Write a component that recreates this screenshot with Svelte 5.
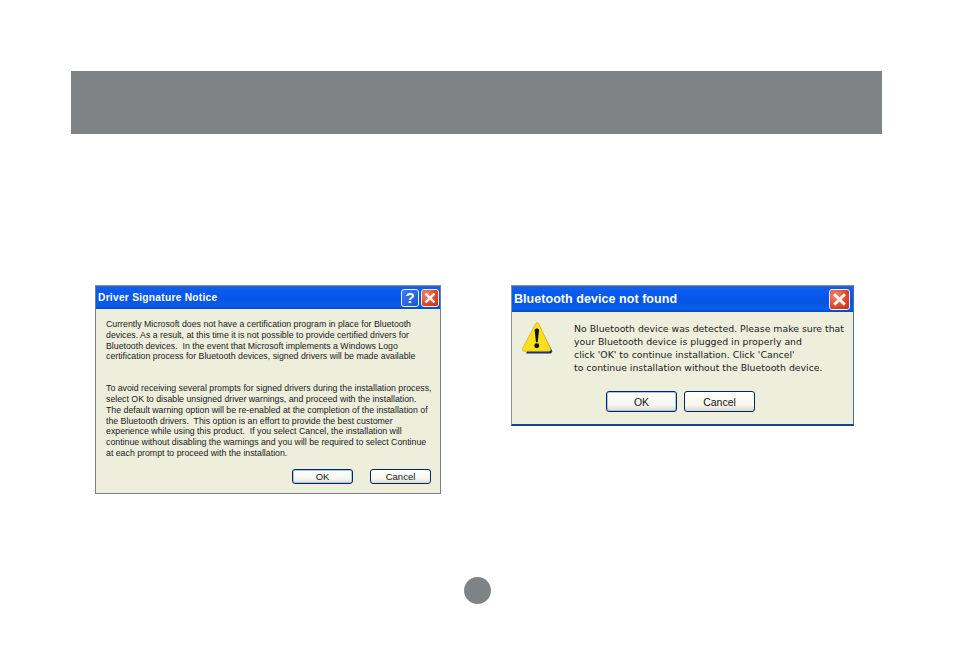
<script lang="ts">
  const noticeParagraphs = [
    [
      'Currently Microsoft does not have a certification program in place for Bluetooth',
      'devices. As a result, at this time it is not possible to provide certified drivers for',
      'Bluetooth devices.  In the event that Microsoft implements a Windows Logo',
      'certification process for Bluetooth devices, signed drivers will be made available'
    ],
    [
      'To avoid receiving several prompts for signed drivers during the installation process,',
      'select OK to disable unsigned driver warnings, and proceed with the installation.',
      'The default warning option will be re-enabled at the completion of the installation of',
      'the Bluetooth drivers.  This option is an effort to provide the best customer',
      'experience while using this product.  If you select Cancel, the installation will',
      'continue without disabling the warnings and you will be required to select Continue',
      'at each prompt to proceed with the installation.'
    ]
  ];

  const notFoundLines = [
    'No Bluetooth device was detected. Please make sure that',
    'your Bluetooth device is plugged in properly and',
    "click 'OK' to continue installation. Click 'Cancel'",
    'to continue installation without the Bluetooth device.'
  ];
</script>

<div class="page">
  <div class="banner"></div>

  <div class="dialogs">
    <section class="dialog notice">
      <header class="titlebar">
        <span class="title">Driver Signature Notice</span>
        <span class="tb-btn help">?</span>
        <span class="tb-btn close">
          <svg viewBox="0 0 16 16"><path d="M3.5 3.5 12.5 12.5M12.500 3.500 3.500 12.500" /></svg>
        </span>
      </header>
      <div class="notice-body">
        {#each noticeParagraphs as para}
          <p>
            {#each para as line}
              <span class="line">{line}</span>
            {/each}
          </p>
        {/each}
      </div>
      <div class="notice-actions">
        <button class="btn default">OK</button>
        <button class="btn">Cancel</button>
      </div>
    </section>

    <section class="dialog found">
      <header class="titlebar">
        <span class="title">Bluetooth device not found</span>
        <span class="tb-btn close">
          <svg viewBox="0 0 16 16"><path d="M3.5 3.5 12.5 12.5M12.500 3.500 3.500 12.500" /></svg>
        </span>
      </header>
      <div class="found-body">
        <svg class="warn" viewBox="0 0 30 31">
          <path d="M15.500 2 29.500 28.500 28 30.500H4z" fill="#1c2f80" />
          <path d="M13.500 1.200c.8-.9 1.800-.9 2.500.2L27.500 25.500c.7 1.500 0 2.800-1.500 2.800H2c-1.500 0-2.200-1.300-1.500-2.800z" fill="#fbdf1e" stroke="#d0ae10" stroke-width=".7" />
          <path d="M12.300 8c0-2.400 4.200-2.400 4.200 0l-1.300 11.500h-1.700z" fill="#111" />
          <circle cx="14.300" cy="23" r="2.400" fill="#111" />
        </svg>
        <div class="found-text">
          {#each notFoundLines as line}
            <span class="line">{line}</span>
          {/each}
        </div>
      </div>
      <div class="found-actions">
        <button class="btn default">OK</button>
        <button class="btn">Cancel</button>
      </div>
    </section>
  </div>

  <div class="page-dot"></div>
</div>

<style>
  :global(body) {
    margin: 0;
    background: #fff;
  }

  .page {
    height: 663px;
    padding: 71px 72px 0 71px;
    box-sizing: border-box;
    font-family: "Liberation Sans", Arial, sans-serif;
    display: flex;
    flex-direction: column;
  }

  .banner {
    height: 63px;
    background: #7f8385;
  }

  .dialogs {
    display: flex;
    align-items: flex-start;
    margin-top: 151px;
    padding-left: 24px;
    gap: 70px;
  }

  .dialog {
    box-sizing: border-box;
    background: #edefdc;
    color: #1a1a1a;
    display: flex;
    flex-direction: column;
  }

  .notice {
    width: 346px;
    height: 209px;
    border: 1px solid #7c8088;
    border-top-color: #8a8f9a;
  }

  .found {
    width: 343px;
    height: 141px;
    border: 1px solid #8a8f9a;
    border-bottom: 2px solid #1b3f9c;
    border-right-color: #4a6ab0;
  }

  .titlebar {
    flex: none;
    height: 23px;
    display: flex;
    align-items: center;
    gap: 2px;
    padding: 0 1px 0 2px;
    background: linear-gradient(180deg, #1f62d8 0%, #0a5cf0 18%, #0454e6 60%, #0a5fea 88%, #0348c8 100%);
    color: #fff;
  }

  .title {
    flex: 1;
    font-weight: 700;
    font-size: 10.2px;
    letter-spacing: 0.27px;
    white-space: pre;
  }

  .found .titlebar {
    height: 26px;
    padding: 0 3px 0 2px;
  }

  .found .title {
    font-size: 12.5px;
    letter-spacing: 0.05px;
  }

  .tb-btn {
    width: 18px;
    height: 18px;
    box-sizing: border-box;
    border: 1px solid #e8eefc;
    border-radius: 3px;
    display: flex;
    align-items: center;
    justify-content: center;
  }

  .found .tb-btn {
    width: 21px;
    height: 21px;
  }

  .help {
    background: linear-gradient(135deg, #3f7bea, #1c55d4);
    font-size: 15px;
    font-weight: 700;
  }

  .close {
    background: radial-gradient(circle at 30% 30%, #f08a6c, #df4526 60%, #c42a10);
  }

  .close svg {
    width: 100%;
    height: 100%;
  }

  .close path {
    fill: none;
    stroke: #fff;
    stroke-width: 2.4;
  }

  .line {
    display: block;
    white-space: pre;
  }

  .notice-body {
    padding: 10px 0 0 10px;
    font-size: 8.77px;
    line-height: 10.8px;
  }

  .notice-body p {
    margin: 0 0 21px;
  }

  .notice-body p:last-child {
    margin-bottom: 0;
  }

  .notice-actions {
    display: flex;
    justify-content: flex-end;
    gap: 17px;
    padding: 0 9px;
    margin-top: auto;
    margin-bottom: 9px;
  }

  .notice .btn {
    width: 61px;
    height: 15px;
    font-size: 9.5px;
  }

  .found-body {
    display: flex;
    padding: 10px 0 0 10px;
  }

  .warn {
    width: 31px;
    height: 32px;
    flex: none;
  }

  .found-text {
    margin-left: 21px;
    font-family: "DejaVu Sans", sans-serif;
    font-size: 9.33px;
    line-height: 13px;
  }

  .found-actions {
    display: flex;
    justify-content: flex-start;
    gap: 7px;
    padding-left: 94px;
    margin-top: 17px;
  }

  .found .btn {
    width: 71px;
    height: 21px;
    font-size: 10.5px;
  }

  .btn {
    box-sizing: border-box;
    padding: 0;
    font-family: inherit;
    color: #111;
    border: 1px solid #00265e;
    border-radius: 3px;
    background: linear-gradient(180deg, #ffffff 0%, #f6f6ee 70%, #dcd9cc 100%);
  }

  .btn.default {
    box-shadow: inset 0 0 0 1px #a9c4ee;
  }

  .page-dot {
    width: 27px;
    height: 27px;
    border-radius: 50%;
    background: #7f8385;
    position: absolute;
    left: 464px;
    top: 577px;
  }
</style>
